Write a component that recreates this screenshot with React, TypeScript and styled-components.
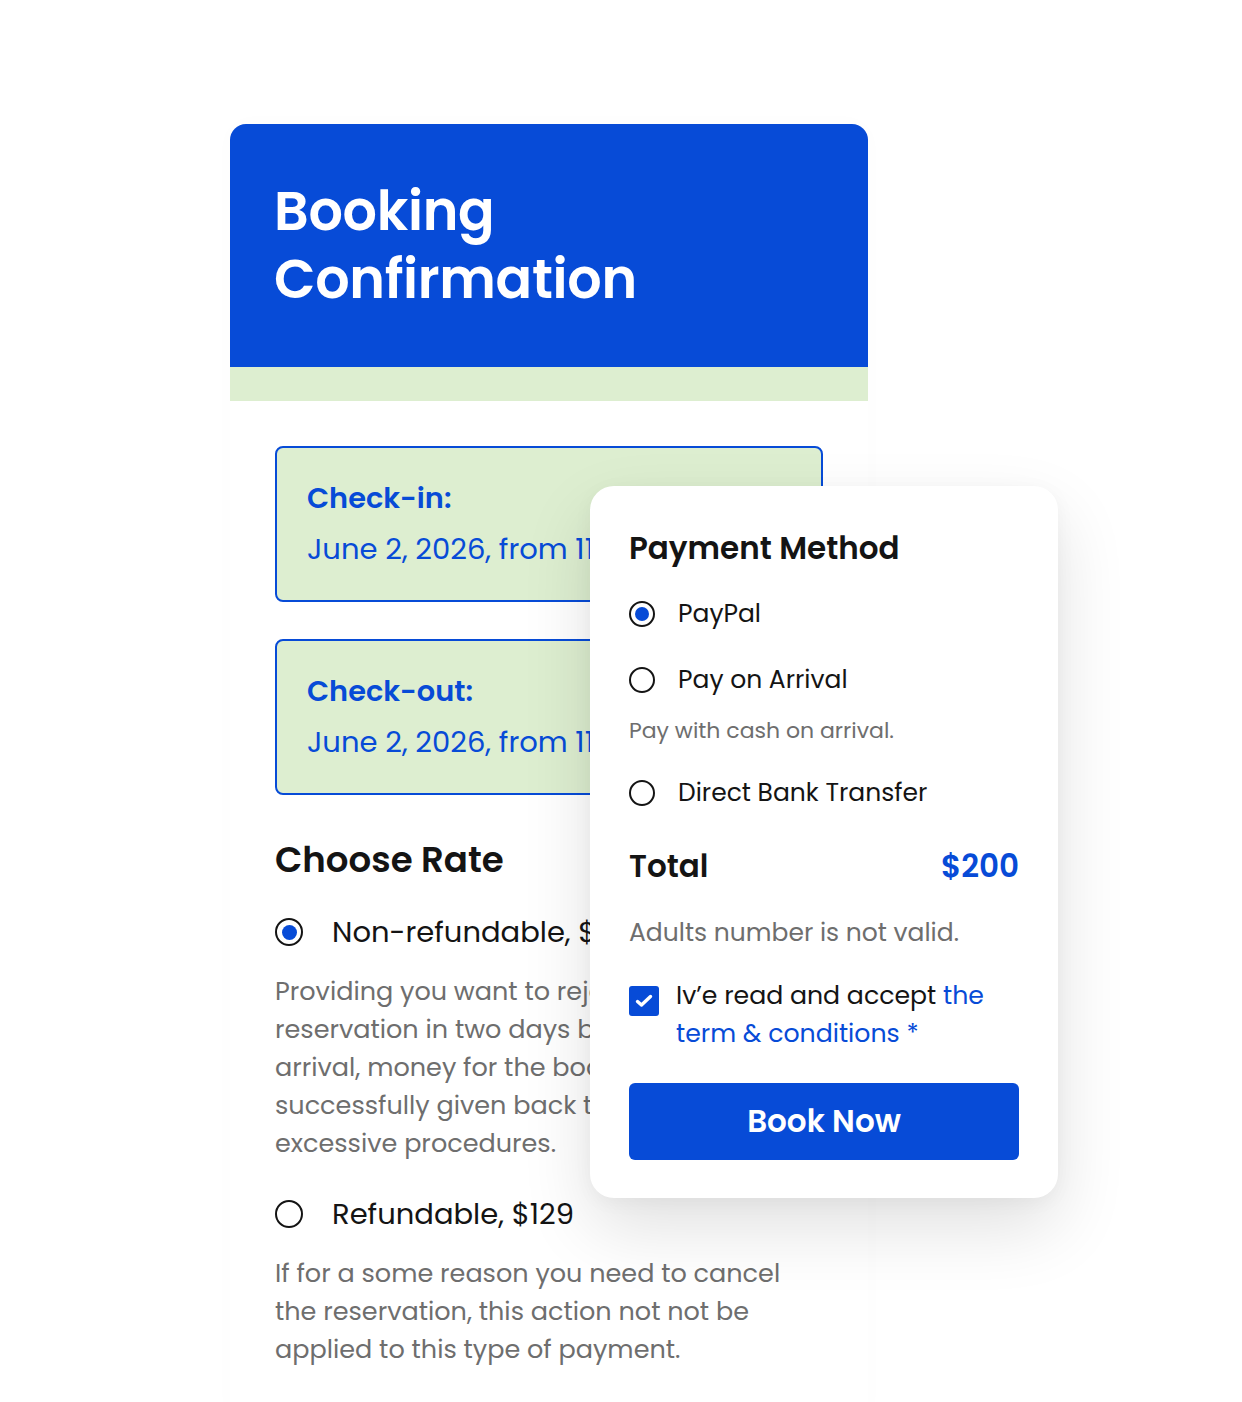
import React from "react";
import styled, { createGlobalStyle } from "styled-components";

const BLUE = "#074bd7";
const GREEN = "#ddeed0";
const INK = "#141414";
const GREY = "#6e6e6e";

const Global = createGlobalStyle`
  html, body { margin: 0; padding: 0; background: #fff; }
  body { font-family: "Poppins", "Open Sans", "Noto Sans", sans-serif; color: ${INK}; }
  * { box-sizing: border-box; }
`;

const Page = styled.div`
  position: relative;
  width: 1242px;
  min-height: 1402px;
  padding: 124px 0 0 230px;
  overflow: hidden;
`;

const MainCard = styled.section`
  width: 638px;
  background: #fff;
  border-radius: 16px 16px 0 0;
  box-shadow: 0 0 24px rgba(0, 0, 0, 0.015);
`;

const Header = styled.header`
  background: ${BLUE};
  border-radius: 16px 16px 0 0;
  height: 243px;
  padding: 53px 44px 0;
`;

const Title = styled.h1`
  margin: 0;
  color: #fff;
  font-size: 54px;
  line-height: 68px;
  font-weight: 600;
  letter-spacing: -0.3px;
`;

const Strip = styled.div`
  height: 34px;
  background: ${GREEN};
`;

const Body = styled.div`
  padding: 45px 45px 45px;
  display: flex;
  flex-direction: column;
`;

const DateBox = styled.div<{ $mt?: number }>`
  margin-top: ${(p) => p.$mt ?? 0}px;
  height: 156px;
  background: ${GREEN};
  border: 2px solid ${BLUE};
  border-radius: 8px;
  padding: 28px 30px 0;
  display: flex;
  flex-direction: column;
  gap: 7px;
  white-space: nowrap;
  overflow: hidden;
`;

const DateLabel = styled.div`
  color: ${BLUE};
  font-size: 28.8px;
  line-height: 44px;
  font-weight: 600;
`;

const DateValue = styled.div`
  color: ${BLUE};
  font-size: 29px;
  line-height: 44px;
`;

const SectionTitle = styled.h2`
  margin: 40px 0 0;
  font-size: 35.6px;
  line-height: 50px;
  font-weight: 600;
  color: ${INK};
`;

const RadioRow = styled.label<{ $gap: number; $fs: number; $lh: number; $mt: number }>`
  display: flex;
  align-items: center;
  gap: ${(p) => p.$gap}px;
  margin-top: ${(p) => p.$mt}px;
  font-size: ${(p) => p.$fs}px;
  line-height: ${(p) => p.$lh}px;
  color: ${INK};
  white-space: nowrap;
`;

const RadioCircle = styled.span<{ $size: number; $on?: boolean }>`
  flex: none;
  width: ${(p) => p.$size}px;
  height: ${(p) => p.$size}px;
  border-radius: 50%;
  border: 2px solid ${INK};
  display: flex;
  align-items: center;
  justify-content: center;
  &::after {
    content: "";
    display: ${(p) => (p.$on ? "block" : "none")};
    width: ${(p) => Math.round(p.$size * 0.52)}px;
    height: ${(p) => Math.round(p.$size * 0.52)}px;
    border-radius: 50%;
    background: ${BLUE};
  }
`;

const Para = styled.p<{ $mt: number }>`
  margin: ${(p) => p.$mt}px 0 0;
  font-size: 25.5px;
  line-height: 38px;
  color: ${GREY};
  white-space: nowrap;
`;

const PayCard = styled.aside`
  position: absolute;
  left: 590px;
  top: 486px;
  width: 468px;
  height: 712px;
  background: #fff;
  border-radius: 24px;
  box-shadow: 0 30px 70px rgba(0, 0, 0, 0.12), 0 4px 20px rgba(0, 0, 0, 0.04);
  padding: 42px 39px 0;
  display: flex;
  flex-direction: column;
`;

const PayTitle = styled.h3`
  margin: 0;
  font-size: 31px;
  line-height: 40px;
  font-weight: 600;
  color: ${INK};
`;

const Helper = styled.div`
  margin-top: 18px;
  font-size: 22px;
  line-height: 30px;
  color: ${GREY};
`;

const TotalRow = styled.div`
  margin-top: 35px;
  display: flex;
  justify-content: space-between;
  align-items: center;
  font-size: 31px;
  line-height: 40px;
  font-weight: 600;
`;

const Price = styled.span`
  color: ${BLUE};
`;

const Error = styled.div`
  margin-top: 29px;
  font-size: 25px;
  line-height: 36px;
  color: ${GREY};
`;

const Agree = styled.label`
  margin-top: 26px;
  display: flex;
  align-items: flex-start;
  gap: 17px;
  font-size: 25.2px;
  line-height: 38px;
  color: ${INK};
`;

const Check = styled.span`
  flex: none;
  margin-top: 9px;
  width: 30px;
  height: 30px;
  border-radius: 3px;
  background: ${BLUE};
  display: flex;
  align-items: center;
  justify-content: center;
`;

const Link = styled.span`
  color: ${BLUE};
`;

const BookButton = styled.button`
  margin-top: 30px;
  height: 77px;
  width: 100%;
  border: none;
  border-radius: 6px;
  background: ${BLUE};
  color: #fff;
  font-family: inherit;
  font-size: 31px;
  font-weight: 600;
  cursor: pointer;
`;

export default function App() {
  return (
    <Page>
      <Global />
      <MainCard>
        <Header>
          <Title>
            Booking
            <br />
            Confirmation
          </Title>
        </Header>
        <Strip />
        <Body>
          <DateBox>
            <DateLabel>Check-in:</DateLabel>
            <DateValue>June 2, 2026, from 11:00 am</DateValue>
          </DateBox>
          <DateBox $mt={37}>
            <DateLabel>Check-out:</DateLabel>
            <DateValue>June 2, 2026, from 11:00 am</DateValue>
          </DateBox>
          <SectionTitle>Choose Rate</SectionTitle>
          <RadioRow $gap={29} $fs={29} $lh={44} $mt={25}>
            <RadioCircle $size={28} $on />
            Non-refundable, $100
          </RadioRow>
          <Para $mt={18}>
            Providing you want to reject the
            <br />
            reservation in two days before
            <br />
            arrival, money for the booking is
            <br />
            successfully given back to you without
            <br />
            excessive procedures.
          </Para>
          <RadioRow $gap={29} $fs={29} $lh={44} $mt={30}>
            <RadioCircle $size={28} />
            Refundable, $129
          </RadioRow>
          <Para $mt={18}>
            If for a some reason you need to cancel
            <br />
            the reservation, this action not not be
            <br />
            applied to this type of payment.
          </Para>
        </Body>
      </MainCard>

      <PayCard>
        <PayTitle>Payment Method</PayTitle>
        <RadioRow $gap={23} $fs={25} $lh={36} $mt={28}>
          <RadioCircle $size={26} $on />
          PayPal
        </RadioRow>
        <RadioRow $gap={23} $fs={25} $lh={36} $mt={30}>
          <RadioCircle $size={26} />
          Pay on Arrival
        </RadioRow>
        <Helper>Pay with cash on arrival.</Helper>
        <RadioRow $gap={23} $fs={25} $lh={36} $mt={29}>
          <RadioCircle $size={26} />
          Direct Bank Transfer
        </RadioRow>
        <TotalRow>
          <span>Total</span>
          <Price>$200</Price>
        </TotalRow>
        <Error>Adults number is not valid.</Error>
        <Agree>
          <Check>
            <svg width="18" height="14" viewBox="0 0 18 14" fill="none">
              <path d="M2.5 7.5 L6.5 11 L15.5 2.5" stroke="#fff" strokeWidth="3.4" strokeLinecap="round" strokeLinejoin="round" />
            </svg>
          </Check>
          <span>
            Iv’e read and accept <Link>the</Link>
            <br />
            <Link>term &amp; conditions *</Link>
          </span>
        </Agree>
        <BookButton>Book Now</BookButton>
      </PayCard>
    </Page>
  );
}
